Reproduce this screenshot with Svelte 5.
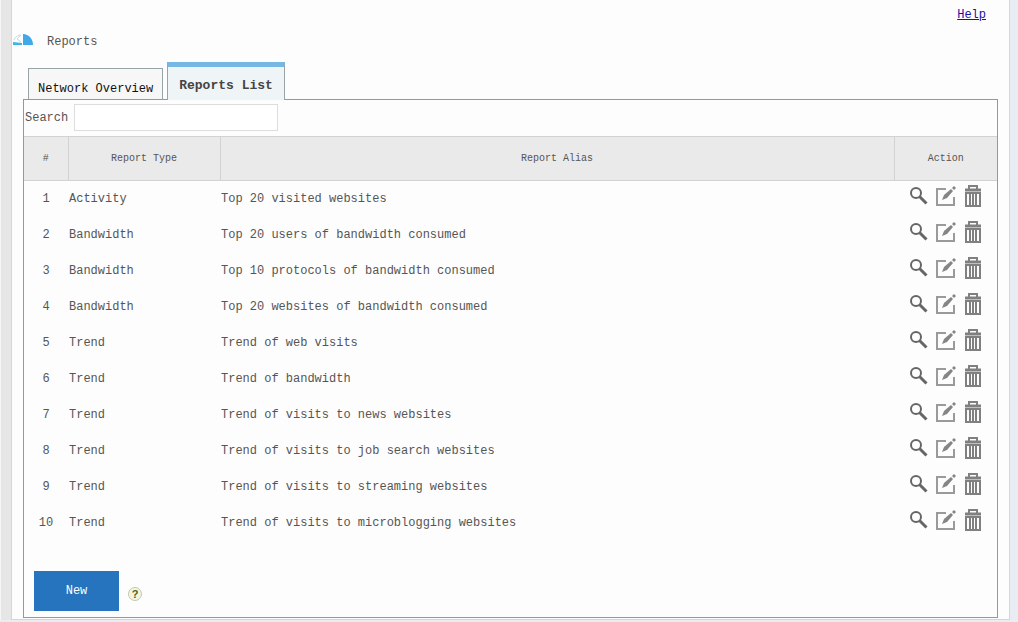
<script lang="ts">
  type Report = { id: number; type: string; alias: string };

  let search = '';
  let reports: Report[] = [
    { id: 1, type: 'Activity', alias: 'Top 20 visited websites' },
    { id: 2, type: 'Bandwidth', alias: 'Top 20 users of bandwidth consumed' },
    { id: 3, type: 'Bandwidth', alias: 'Top 10 protocols of bandwidth consumed' },
    { id: 4, type: 'Bandwidth', alias: 'Top 20 websites of bandwidth consumed' },
    { id: 5, type: 'Trend', alias: 'Trend of web visits' },
    { id: 6, type: 'Trend', alias: 'Trend of bandwidth' },
    { id: 7, type: 'Trend', alias: 'Trend of visits to news websites' },
    { id: 8, type: 'Trend', alias: 'Trend of visits to job search websites' },
    { id: 9, type: 'Trend', alias: 'Trend of visits to streaming websites' },
    { id: 10, type: 'Trend', alias: 'Trend of visits to microblogging websites' }
  ];

  $: shown = reports.filter((r) =>
    (r.type + ' ' + r.alias).toLowerCase().includes(search.trim().toLowerCase())
  );

  function remove(id: number) {
    reports = reports.filter((r) => r.id !== id);
  }
</script>

<div class="frame">
  <main class="page">
    <div class="top"><a href="#help">Help</a></div>

    <header class="title">
      <svg width="20" height="11" viewBox="0 0 20 11" aria-hidden="true">
        <path d="M10 0v11h10C20 5 16 0 10 0z" fill="#3fa9ea" />
        <path d="M0 8l9 1v2H0z" fill="#3fb4e6" />
        <path d="M1 6C2 3 5 1 8 1L4 5l4 3" fill="none" stroke="#b5e2f2" />
      </svg>
      <h1>Reports</h1>
    </header>

    <nav class="tabs">
      <a class="tab" href="#overview">Network Overview</a>
      <a class="tab active" href="#list" aria-current="page">Reports List</a>
    </nav>

    <section class="panel">
      <div class="search">
        <label for="search">Search</label>
        <input id="search" type="text" bind:value={search} />
      </div>

      <table>
        <thead>
          <tr>
            <th class="num">#</th>
            <th class="type">Report Type</th>
            <th>Report Alias</th>
            <th class="action">Action</th>
          </tr>
        </thead>
        <tbody>
          {#each shown as r (r.id)}
            <tr>
              <td class="num">{r.id}</td>
              <td>{r.type}</td>
              <td>{r.alias}</td>
              <td class="action">
                <div class="icons">
                  <button type="button" aria-label="View">
                    <svg width="18" height="22" viewBox="0 0 18 22">
                      <circle cx="6" cy="8" r="5" fill="none" stroke="#666" stroke-width="2" />
                      <path d="M9.5 11.5l7 7" fill="none" stroke="#666" stroke-width="3" />
                    </svg>
                  </button>
                  <button type="button" aria-label="Edit">
                    <svg width="20" height="22" viewBox="0 0 20 22">
                      <path d="M10 4H1v16h17v-8" fill="none" stroke="#9a9a9a" stroke-width="2" />
                      <path d="M6 15l2-5 7-6 2 2-6 7z" fill="#858585" />
                      <path d="M16 3l2-2 2 2-2 2z" fill="#858585" />
                    </svg>
                  </button>
                  <button type="button" aria-label="Delete" on:click={() => remove(r.id)}>
                    <svg width="18" height="22" viewBox="0 0 18 22">
                      <path d="M5 4V1h8v3" fill="none" stroke="#808080" stroke-width="2" />
                      <path d="M1 5h16" stroke="#808080" stroke-width="3" />
                      <path d="M2 8h14v13H2z" fill="none" stroke="#808080" stroke-width="2" />
                      <path d="M6 9v11M9 9v11M12 9v11" stroke="#808080" stroke-width="2" />
                    </svg>
                  </button>
                </div>
              </td>
            </tr>
          {/each}
        </tbody>
      </table>

      <div class="footer">
        <button class="new" type="button">New</button>
        <button class="hint" type="button" aria-label="About reports">?</button>
      </div>
    </section>
  </main>
</div>

<style>
  :global(body) {
    margin: 0;
    background: #e9ecf1;
  }

  .frame {
    padding: 0 8px 0 2px;
    border-left: 1px solid #f6f6f6;
    background: linear-gradient(to right, #e6e6e6 50%, #e9ecf3 50%);
    font: 12px/16px 'Liberation Mono', monospace;
    color: #555;
  }

  .page {
    margin-left: 8px;
    padding: 4px 11px 1px;
    background: #fdfdfd;
    border: 1px solid #d3d6dc;
    border-top: 0;
  }

  .top {
    padding: 3px 12px 0;
    text-align: right;
  }

  .top a {
    color: #1a0dab;
  }

  .title {
    display: flex;
    gap: 14px;
    height: 39px;
    margin-left: -10px;
    padding-top: 11px;
    box-sizing: border-box;
  }

  .title h1 {
    margin: 0;
    font-size: 12px;
    font-weight: normal;
  }

  .tabs {
    display: flex;
    align-items: flex-end;
    gap: 4px;
    padding-left: 5px;
  }

  .tab {
    box-sizing: border-box;
    height: 31px;
    padding: 12px 9px 0;
    border: 1px solid #98a4a8;
    border-bottom: 0;
    background: #f7f7f7;
    color: #111;
    text-decoration: none;
    white-space: nowrap;
  }

  .tab.active {
    position: relative;
    height: 38px;
    margin-bottom: -1px;
    padding: 11px 11px 0;
    border-top: 5px solid #76b7e3;
    background: #eff5f7;
    color: #444;
    font-size: 13px;
    font-weight: bold;
  }

  .panel {
    border: 1px solid #84a09f;
  }

  .search {
    display: flex;
    align-items: center;
    gap: 6px;
    padding: 4px 1px 5px;
  }

  .search input {
    box-sizing: border-box;
    width: 204px;
    height: 27px;
    padding: 0 6px;
    border: 1px solid #ddd;
    background: #fff;
    font: inherit;
  }

  table {
    width: 100%;
    border-collapse: collapse;
    table-layout: fixed;
  }

  th {
    box-sizing: border-box;
    height: 44px;
    padding: 0;
    border: 1px solid #d2d2d2;
    background: #eaeaea;
    font-size: 10px;
    font-weight: normal;
  }

  th:first-child {
    border-left: 0;
  }

  th:last-child {
    border-right: 0;
  }

  .num {
    width: 44px;
    text-align: center;
  }

  .type {
    width: 152px;
  }

  .action {
    width: 103px;
  }

  td {
    height: 36px;
    padding: 0 1px;
  }

  td.num {
    padding: 0;
  }

  .icons {
    display: flex;
    justify-content: center;
    gap: 8px;
    padding-bottom: 6px;
  }

  .icons button {
    display: block;
    padding: 0;
    border: 0;
    background: none;
    cursor: pointer;
  }

  .icons svg {
    display: block;
  }

  .footer {
    display: flex;
    align-items: center;
    gap: 9px;
    padding: 30px 10px 6px;
  }

  .new {
    width: 85px;
    height: 40px;
    border: 0;
    background: #2673be;
    color: #fff;
    font: inherit;
    cursor: pointer;
  }

  .hint {
    width: 14px;
    height: 14px;
    margin-top: 6px;
    padding: 0;
    border: 1px solid #c4c8b4;
    border-radius: 50%;
    background: #f4f6dc;
    color: #55601a;
    font: bold 11px/12px 'Liberation Sans', sans-serif;
    cursor: pointer;
  }
</style>
